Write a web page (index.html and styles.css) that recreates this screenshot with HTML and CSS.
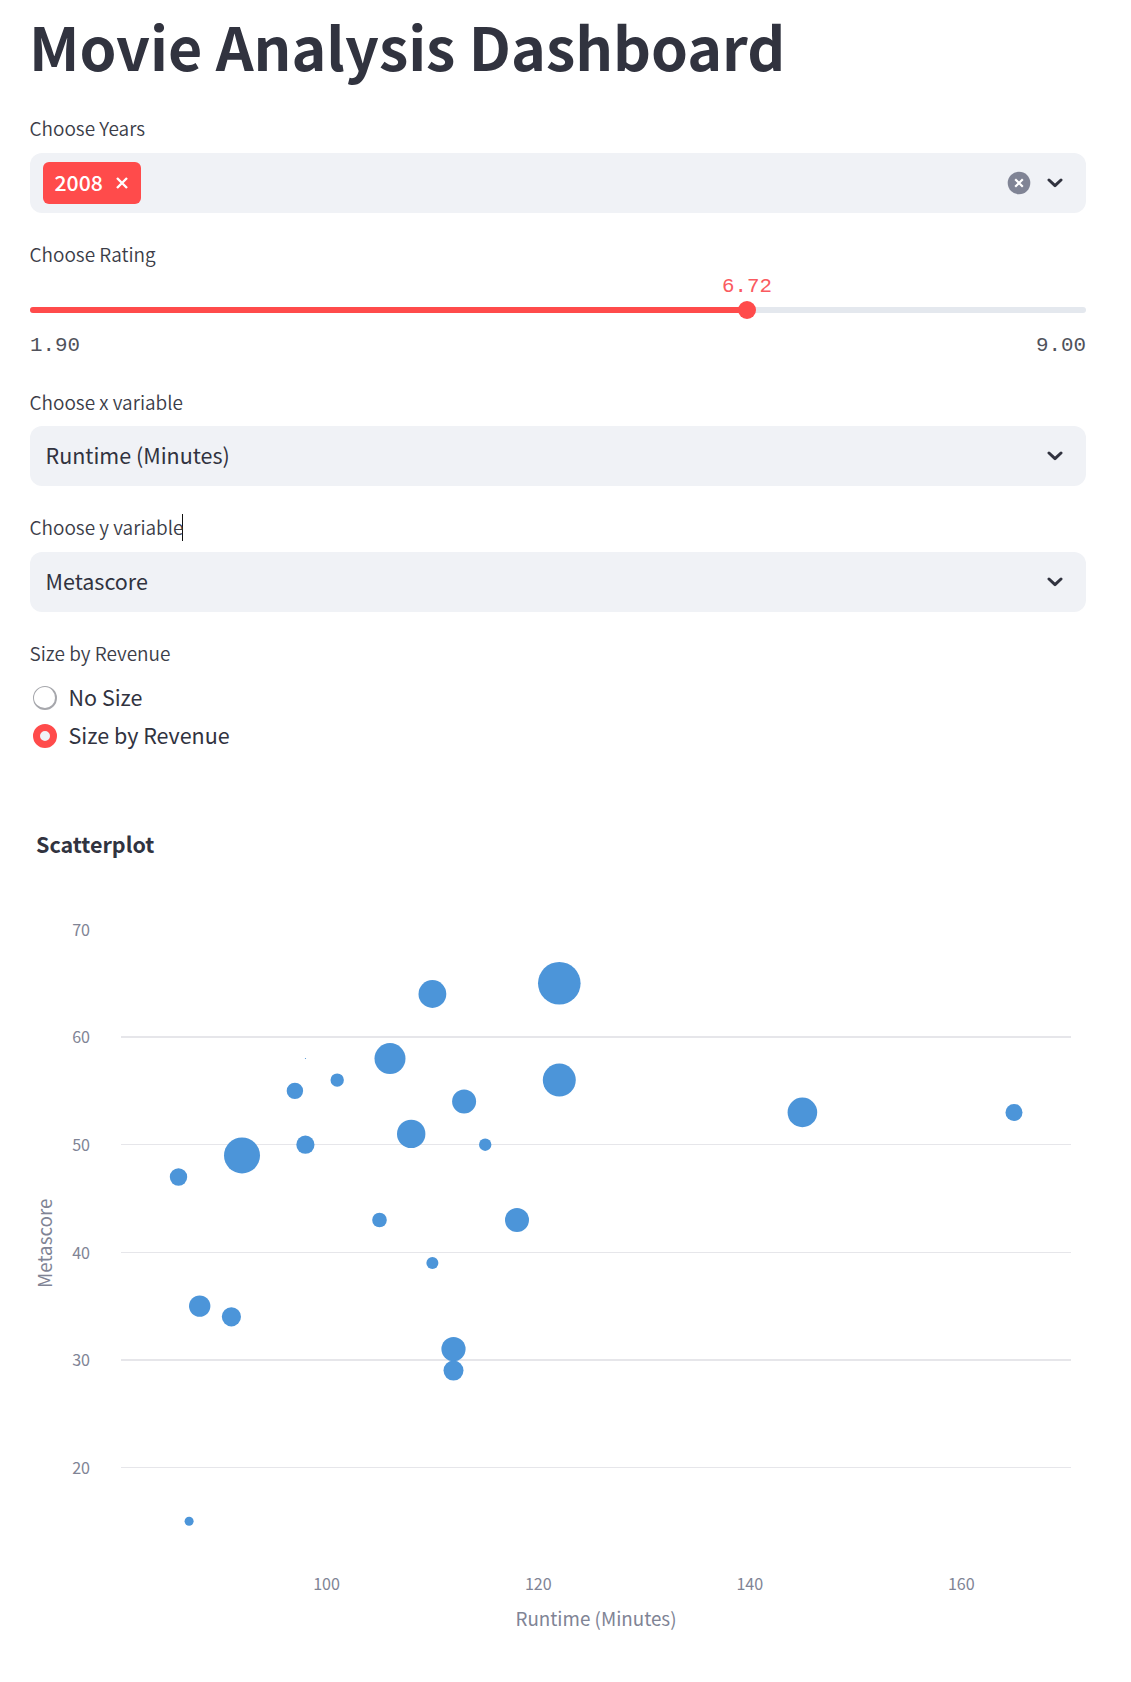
FILE: index.html
```html
<!DOCTYPE html>
<html lang="en">
<head>
<meta charset="utf-8">
<title>Movie Analysis Dashboard</title>
<link rel="stylesheet" href="styles.css">
</head>
<body>
<main class="page">
  <h1 class="title">Movie Analysis Dashboard</h1>

  <section class="field">
    <div class="label">Choose Years</div>
    <div class="select select-multi">
      <span class="tag"><span class="text">2008</span>
        <svg class="tag-close" viewBox="0 0 12 12"><path d="M1 1 11 11M11 1 1 11"/></svg>
      </span>
      <span class="select-icons">
        <svg class="clear" viewBox="0 0 24 24"><circle cx="12" cy="12" r="11.3"/><path d="M8.2 8.2 15.8 15.8M15.8 8.2 8.2 15.8"/></svg>
        <svg class="chevron" viewBox="0 0 16 10"><path d="M2 2 8 7.6 14 2"/></svg>
      </span>
    </div>
  </section>

  <section class="field">
    <div class="label">Choose Rating</div>
    <div class="slider">
      <div class="track"><div class="fill" style="width: 67.9%"></div><div class="thumb" style="left: 67.9%"><span class="value">6.72</span></div></div>
      <div class="range"><span>1.90</span><span>9.00</span></div>
    </div>
  </section>

  <section class="field">
    <div class="label label-tight">Choose x variable</div>
    <div class="select"><span class="text">Runtime (Minutes)</span><svg class="chevron" viewBox="0 0 16 10"><path d="M2 2 8 7.6 14 2"/></svg></div>
  </section>

  <section class="field">
    <div class="label"><span class="with-caret">Choose y variable</span></div>
    <div class="select"><span class="text">Metascore</span><svg class="chevron" viewBox="0 0 16 10"><path d="M2 2 8 7.6 14 2"/></svg></div>
  </section>

  <section class="field">
    <div class="label">Size by Revenue</div>
    <div class="radios">
      <div class="radio"><span class="dot"></span><span class="text">No Size</span></div>
      <div class="radio"><span class="dot dot-on"></span><span class="text">Size by Revenue</span></div>
    </div>
  </section>
</main>

<svg class="chart" viewBox="0 755 1131 927" width="1131" height="927">
  <text class="chart-title" x="36" y="853">Scatterplot</text>
  <g class="grid">
    <rect x="121" y="1036" width="950" height="2"/>
    <rect x="121" y="1144" width="950" height="1"/>
    <rect x="121" y="1252" width="950" height="1"/>
    <rect x="121" y="1359" width="950" height="2"/>
    <rect x="121" y="1467" width="950" height="1"/>
  </g>
  <g class="tick tick-y">
    <text x="90" y="936">70</text>
    <text x="90" y="1043">60</text>
    <text x="90" y="1151">50</text>
    <text x="90" y="1259">40</text>
    <text x="90" y="1366">30</text>
    <text x="90" y="1474">20</text>
  </g>
  <g class="tick tick-x">
    <text x="326.6" y="1590">100</text>
    <text x="538.3" y="1590">120</text>
    <text x="749.8" y="1590">140</text>
    <text x="961.3" y="1590">160</text>
  </g>
  <text class="axis-title" x="596" y="1626">Runtime (Minutes)</text>
  <text class="axis-title" transform="translate(52 1288) rotate(-90)">Metascore</text>
  <g class="points">
    <circle cx="559.3" cy="983.3" r="21.3"/>
    <circle cx="432.4" cy="994" r="13.9"/>
    <circle cx="390" cy="1058.6" r="15.5"/>
    <circle cx="305.5" cy="1058.5" r=".6"/>
    <circle cx="337.2" cy="1080.1" r="6.7"/>
    <circle cx="294.9" cy="1090.9" r="8.2"/>
    <circle cx="559.3" cy="1080.1" r="16.5"/>
    <circle cx="464.1" cy="1101.6" r="12"/>
    <circle cx="802.4" cy="1112.4" r="14.8"/>
    <circle cx="1014" cy="1112.4" r="8.5"/>
    <circle cx="411.2" cy="1133.9" r="14.2"/>
    <circle cx="485.2" cy="1144.7" r="6.2"/>
    <circle cx="305.4" cy="1144.7" r="9.1"/>
    <circle cx="242" cy="1155.4" r="18"/>
    <circle cx="178.5" cy="1177" r="8.7"/>
    <circle cx="379.5" cy="1220" r="7.3"/>
    <circle cx="517" cy="1220" r="12"/>
    <circle cx="432.4" cy="1263" r="6"/>
    <circle cx="199.7" cy="1306.1" r="10.7"/>
    <circle cx="231.4" cy="1316.8" r="9.6"/>
    <circle cx="453.5" cy="1349.1" r="12.1"/>
    <circle cx="453.5" cy="1370.6" r="10"/>
    <circle cx="189.1" cy="1521.3" r="4.5"/>
  </g>
</svg>
</body>
</html>
```

FILE: styles.css
```css
body {
  margin: 0;
  background: #fff;
  color: #31333f;
  font-family: "Noto Sans CJK JP", "Noto Sans CJK SC", sans-serif;
  font-size: 21.5px;
}
.page {
  box-sizing: border-box;
  height: 755px;
  width: 1086px;
  padding: 5px 0 0 30px;
}
.title {
  margin: 0 0 28px -1px;
  font-size: 59.1px;
  line-height: 80px;
  font-weight: 700;
}
.field { margin-bottom: 26px; }
.label {
  font-size: 19px;
  line-height: 30px;
  margin: 0 0 10px -0.5px;
  color: #3b3d48;
  font-weight: 350;
}
.label-tight { margin-bottom: 9px; }
.with-caret {
  display: inline-block;
  box-sizing: border-box;
  width: 153.5px;
  height: 27px;
  margin-top: 2px;
  line-height: 26px;
  white-space: nowrap;
  border-right: 1px solid #111;
  vertical-align: top;
}
.select {
  box-sizing: border-box;
  height: 60px;
  padding: 0 23px 0 15.5px;
  border-radius: 12px;
  background: #f0f2f6;
  display: flex;
  align-items: center;
  justify-content: space-between;
  line-height: 36px;
}
.select-multi { padding-left: 13px; }
.text { padding-bottom: 2px; }
.tag {
  box-sizing: border-box;
  width: 98px;
  height: 42px;
  padding: 0 13px 0 11.5px;
  border-radius: 6px;
  background: #ff4b4b;
  color: #fff;
  font-size: 21.2px;
  font-weight: 500;
  display: flex;
  align-items: center;
  justify-content: space-between;
}
.tag-close { width: 12px; height: 12px; }
.tag-close path { stroke: #fff; stroke-width: 2.4; }
.select-icons { display: flex; align-items: center; gap: 16px; }
.clear { width: 24px; height: 24px; }
.clear circle { fill: #808495; }
.clear path { stroke: #fff; stroke-width: 2.2; }
.chevron { width: 16px; height: 10px; }
.chevron path {
  fill: none;
  stroke: #31333f;
  stroke-width: 3;
  stroke-linecap: round;
  stroke-linejoin: round;
}
.slider {
  box-sizing: border-box;
  height: 82px;
  padding-top: 28px;
  font-family: "Liberation Mono", monospace;
  font-size: 20.8px;
  line-height: 24px;
  color: #50525b;
}
.track {
  position: relative;
  height: 6px;
  border-radius: 3px;
  background: #e4e8ee;
}
.fill { height: 6px; border-radius: 3px; background: #ff4b4b; }
.thumb {
  position: absolute;
  top: -6px;
  width: 18px;
  height: 18px;
  margin-left: -9px;
  border-radius: 50%;
  background: #ff4b4b;
}
.value {
  position: absolute;
  bottom: 20px;
  left: 50%;
  transform: translateX(-50%);
  color: #fa5a60;
}
.range {
  display: flex;
  justify-content: space-between;
  margin-top: 21px;
}
.radios { padding-top: 1px; }
.radio {
  display: flex;
  align-items: center;
  gap: 11.5px;
  height: 38px;
  padding-left: 3px;
  line-height: 36px;
}
.dot {
  box-sizing: border-box;
  width: 24px;
  height: 24px;
  border-radius: 50%;
  border: 1px solid #a6a7ac;
  border-right-width: 2px;
  border-bottom-width: 2px;
}
.dot-on { border: 7.5px solid #ff4b4b; background: #f0f2f6; }
.chart { display: block; }
.chart-title { font-size: 21.5px; font-weight: 700; fill: #31333f; }
.grid { fill: #e6e6ea; }
.tick { font-size: 16.1px; fill: #808495; }
.tick-y { text-anchor: end; }
.tick-x { text-anchor: middle; }
.axis-title { font-size: 18.8px; fill: #808495; }
.axis-title:not([transform]) { text-anchor: middle; }
.points { fill: #4c95d9; }
```
